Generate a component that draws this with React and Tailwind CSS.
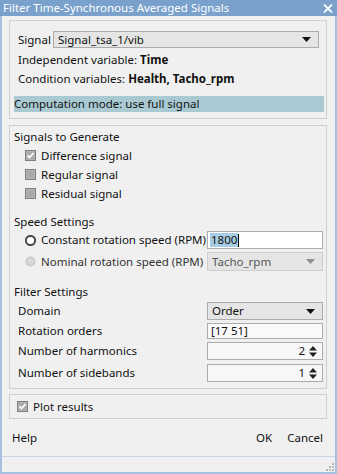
import React from 'react';

const FONT = { fontFamily: '"Noto Sans", "Open Sans", sans-serif' };

function Check({ checked }) {
  return (
    <svg width="11" height="11" viewBox="0 0 11 11" className="shrink-0">
      <rect x="0.5" y="0.5" width="10" height="10" fill="#bdbdbd" stroke="#7d7d7d" />
      <rect x="1.5" y="1.5" width="8" height="8" fill="#a9a9a9" />
      {checked && <path d="M2.5 5.5l2 2 4-4.5" fill="none" stroke="#fff" strokeWidth="1.8" />}
    </svg>
  );
}

function Radio({ on }) {
  return on ? (
    <svg width="11" height="11" viewBox="0 0 11 11" className="shrink-0">
      <circle cx="5.5" cy="5.5" r="4.6" fill="#fff" stroke="#4a4a4a" strokeWidth="2" />
    </svg>
  ) : (
    <svg width="11" height="11" viewBox="0 0 11 11" className="shrink-0">
      <circle cx="5.5" cy="5.5" r="5" fill="#c9c9c9" />
      <circle cx="5.5" cy="5.5" r="3.5" fill="#d8d8d8" />
    </svg>
  );
}

function Arrow({ dim }) {
  return (
    <svg width="9" height="5" viewBox="0 0 9 5" className="shrink-0">
      <path d="M0 0h9L4.5 5z" fill={dim ? '#8e8e8e' : '#111'} />
    </svg>
  );
}

function Spin() {
  return (
    <svg width="8" height="11" viewBox="0 0 8 11" className="shrink-0">
      <path d="M0 4.5L4 0l4 4.5z M0 6.5h8L4 11z" fill="#222" />
    </svg>
  );
}

function Combo({ value, dim, tall }) {
  return (
    <div className={`w-[116px] ${tall ? 'h-[19px]' : 'h-[18px]'} flex items-center justify-between pl-[4px] pr-[7px] border ${dim ? 'border-[#cdcdcd] text-[#555]' : 'border-[#acacac] text-[#111]'} bg-[#e5e5e5]`}>
      <span>{value}</span>
      <Arrow dim={dim} />
    </div>
  );
}

function Spinner({ value }) {
  return (
    <div className="w-[116px] h-[18px] flex items-center justify-end gap-[4px] pr-[5px] border border-[#acacac] bg-[#f7f7f7] text-[#111]">
      <span>{value}</span>
      <Spin />
    </div>
  );
}

export default function App() {
  return (
    <div className="w-[337px] h-[474px] flex flex-col bg-[#a5c1df] text-[11.5px] text-[#111] leading-none whitespace-nowrap" style={FONT}>
      {/* title bar */}
      <div className="h-[16px] flex items-center justify-between pl-[3px] pr-[4px] bg-[#79a1cc] text-white">
        <span>Filter Time-Synchronous Averaged Signals</span>
        <svg width="10" height="9" viewBox="0 0 10 9"><path d="M1 0.5l8 8M9 0.5l-8 8" stroke="#fff" strokeWidth="1.8" /></svg>
      </div>

      <div className="flex-1 mx-[2px] mb-[2px] bg-[#f0f0f0] flex flex-col">
        {/* signal panel */}
        <div className="mt-[4px] ml-[7px] w-[318px] h-[99px] border border-[#d0d0d0] flex flex-col">
          <div className="mt-[10px] h-[17px] flex items-center">
            <span className="ml-[8px] w-[35px]">Signal</span>
            <div className="w-[266px] h-[17px] flex items-center justify-between pl-[4px] pr-[7px] border border-[#acacac] bg-[#e5e5e5]">
              <span>Signal_tsa_1/vib</span>
              <Arrow />
            </div>
          </div>
          <div className="mt-[3px] h-[18px] flex items-center pl-[8px]">
            Independent variable:&nbsp;<b>Time</b>
          </div>
          <div className="mt-[1px] h-[18px] flex items-center pl-[8px]">
            Condition variables:&nbsp;<b>Health, Tacho_rpm</b>
          </div>
          <div className="mt-[8px] ml-[4px] mr-[2px] h-[16px] flex items-center bg-[#aacad3]">
            Computation mode: use full signal
          </div>
        </div>

        {/* settings panel */}
        <div className="mt-[6px] ml-[7px] w-[318px] h-[264px] border border-[#d0d0d0] flex flex-col">
          <div className="mt-[2px] h-[18px] flex items-center pl-[4px]">Signals to Generate</div>
          {[['Difference signal', true], ['Regular signal', false], ['Residual signal', false]].map(([label, on]) => (
            <div key={label} className="h-[19px] flex items-center gap-[5px] pl-[15px]">
              <Check checked={on} />
              <span>{label}</span>
            </div>
          ))}
          <div className="mt-[10px] h-[18px] flex items-center pl-[4px]">Speed Settings</div>
          <div className="h-[18px] flex items-center">
            <div className="w-[197px] flex items-center gap-[5px] pl-[15px]">
              <Radio on />
              <span>Constant rotation speed (RPM)</span>
            </div>
            <div className="w-[116px] h-[18px] flex items-center pl-[2px] border border-[#acacac] bg-white">
              <span className="bg-[#a8cce4] px-[1px] py-[1px]">1800</span>
              <span className="w-[1px] h-[13px] bg-black" />
            </div>
          </div>
          <div className="mt-[3px] h-[19px] flex items-center">
            <div className="w-[197px] flex items-center gap-[5px] pl-[15px]">
              <Radio />
              <span className="text-[#333]">Nominal rotation speed (RPM)</span>
            </div>
            <Combo value="Tacho_rpm" dim tall />
          </div>
          <div className="mt-[12px] h-[18px] flex items-center pl-[4px]">Filter Settings</div>
          <div className="mt-[1px] h-[18px] flex items-center">
            <span className="w-[197px] pl-[8px]">Domain</span>
            <Combo value="Order" />
          </div>
          <div className="mt-[3px] h-[16px] flex items-center">
            <span className="w-[197px] pl-[8px]">Rotation orders</span>
            <div className="w-[116px] h-[16px] flex items-center pl-[3px] border border-[#acacac] bg-[#f9f9f9]">[17 51]</div>
          </div>
          <div className="mt-[3px] h-[18px] flex items-center">
            <span className="w-[197px] pl-[8px]">Number of harmonics</span>
            <Spinner value="2" />
          </div>
          <div className="mt-[4px] h-[18px] flex items-center">
            <span className="w-[197px] pl-[8px]">Number of sidebands</span>
            <Spinner value="1" />
          </div>
        </div>

        {/* plot panel */}
        <div className="mt-[5px] ml-[7px] w-[318px] h-[25px] border border-[#d0d0d0] flex items-center gap-[5px] pl-[7px]">
          <Check checked />
          <span>Plot results</span>
        </div>

        {/* buttons */}
        <div className="mt-[10px] h-[18px] flex items-center justify-between pl-[10px] pr-[12px]">
          <span>Help</span>
          <div className="flex gap-[15px]">
            <span>OK</span>
            <span>Cancel</span>
          </div>
        </div>

        {/* status bar */}
        <div className="mt-auto h-[16px] border-t border-[#c9d6e3] flex justify-end items-end pr-[1px] pb-[1px]">
          <svg width="9" height="9" viewBox="0 0 9 9">
            {[[7, 1], [4, 4], [7, 4], [1, 7], [4, 7], [7, 7]].map(([x, y]) => (
              <rect key={`${x}-${y}`} x={x} y={y} width="2" height="2" fill="#b8b8b8" />
            ))}
          </svg>
        </div>
      </div>
    </div>
  );
}
